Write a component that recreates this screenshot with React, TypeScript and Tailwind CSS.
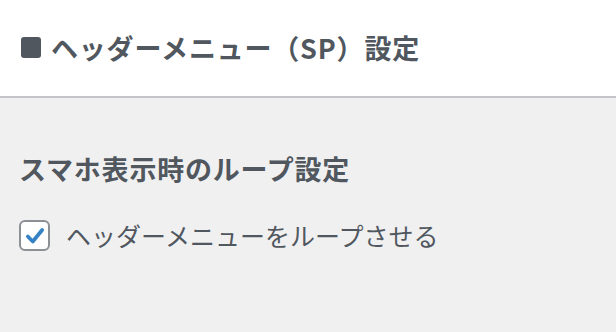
import React, { useState } from 'react';

export default function App() {
  const [loop, setLoop] = useState<boolean>(true);

  return (
    <div className="w-[616px] h-[332px] bg-[#f0f0f1] font-['Noto_Sans_CJK_JP','Noto_Sans',sans-serif] text-[#50575e]">
      {/* Header */}
      <div className="h-[98px] bg-white border-b-2 border-[#c3c4c7] flex items-center pl-[21px] pb-[2px]">
        <span className="w-[20px] h-[21px] rounded-[3px] bg-[#50575e] shrink-0" />
        <h2 className="ml-[10px] text-[27px] tracking-[0.8px] font-bold leading-none">ヘッダーメニュー（SP）設定</h2>
      </div>

      {/* Body */}
      <div className="px-[19px] pt-[57px]">
        <h3 className="text-[27px] tracking-[0.8px] font-bold leading-none">スマホ表示時のループ設定</h3>

        <label className="mt-[38px] flex items-center cursor-pointer">
          <span className="relative w-[31px] h-[31px] rounded-[6px] border-2 border-[#8c8f94] bg-white shrink-0 flex items-center justify-center">
            <input
              type="checkbox"
              checked={loop}
              onChange={(e) => setLoop(e.target.checked)}
              className="absolute inset-0 opacity-0 cursor-pointer"
            />
            {loop && (
              <svg viewBox="0 0 20 20" className="w-[22px] h-[22px]">
                <path d="M3.5 10.5 L8 15 L16.5 4.5" fill="none" stroke="#3582c4" strokeWidth="3.4" strokeLinecap="round" strokeLinejoin="round" />
              </svg>
            )}
          </span>
          <span className="ml-[16px] text-[25px] leading-none">ヘッダーメニューをループさせる</span>
        </label>
      </div>
    </div>
  );
}
